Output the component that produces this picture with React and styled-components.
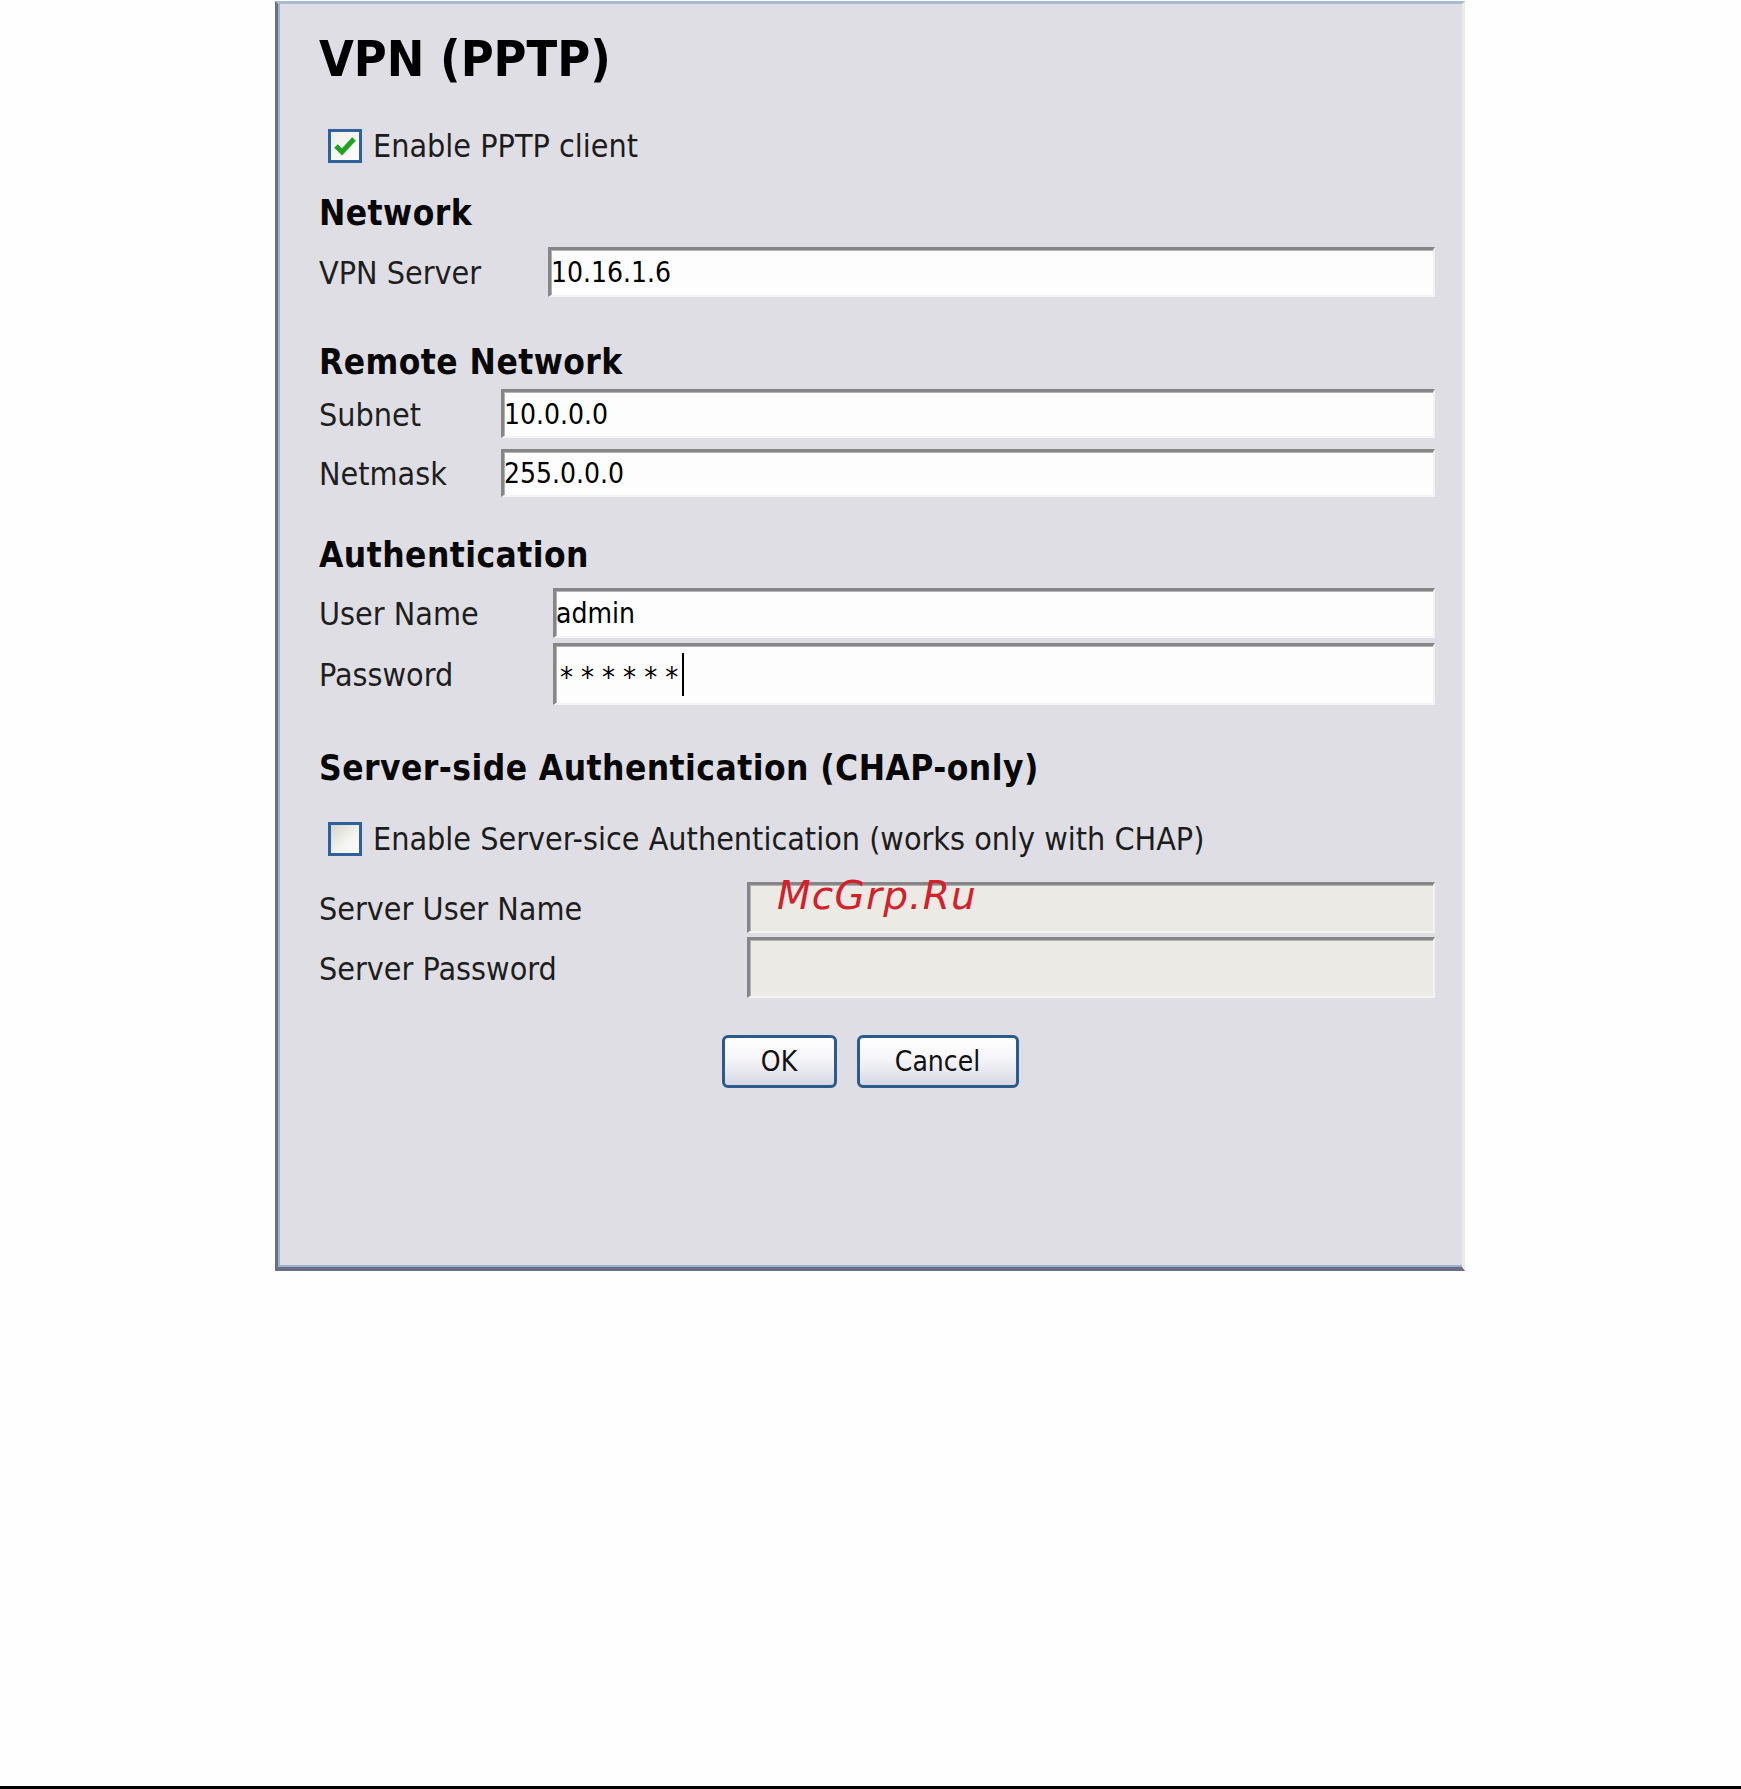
import styled, { createGlobalStyle } from 'styled-components'

const GlobalStyle = createGlobalStyle`
  html, body {
    margin: 0;
    padding: 0;
    background: #fefefe;
  }
  body {
    font-family: "DejaVu Sans Condensed", "DejaVu Sans", Verdana, sans-serif;
    font-stretch: condensed;
  }
`

const Page = styled.div`
  width: 1741px;
  height: 1789px;
  box-sizing: border-box;
  padding-top: 1px;
  display: flex;
  flex-direction: column;
`

const Panel = styled.div`
  margin-left: 275px;
  width: 1190px;
  height: 1270px;
  box-sizing: border-box;
  background: #dfdee4;
  border-top: 3px solid #a9bbd1;
  border-left: 3px solid #6b6e88;
  border-bottom: 4px solid #6b6e88;
  border-right: 3px solid #ebeae3;
  box-shadow: inset 2px -2px 0 #9eb2cb;
  padding: 25px 27px 0 41px;
  display: flex;
  flex-direction: column;
`

const Title = styled.h1`
  margin: 0;
  font-size: 50px;
  line-height: 60px;
  font-weight: bold;
  color: #000;
`

const Heading = styled.h2`
  margin: ${p => p.$mt}px 0 0;
  font-size: 35px;
  line-height: 40px;
  font-weight: bold;
  letter-spacing: 0.45px;
  color: #080808;
`

const CheckRow = styled.label`
  display: flex;
  align-items: center;
  gap: 11px;
  height: 34px;
  margin-top: ${p => p.$mt}px;
  padding-left: 9px;
  font-size: 32px;
  line-height: 34px;
  color: #1c1c1c;
`

const Box = styled.span`
  width: 34px;
  height: 34px;
  box-sizing: border-box;
  border: 3px solid #30619a;
  background: ${p => p.$checked
    ? 'linear-gradient(135deg, #eeeeea, #ffffff)'
    : 'linear-gradient(135deg, #d6d6cf, #f4f4f1 60%, #ffffff)'};
  display: flex;
  align-items: center;
  justify-content: center;
`

const Row = styled.div`
  display: grid;
  grid-template-columns: ${p => p.$label}px 1fr;
  align-items: center;
  margin-top: ${p => p.$mt}px;
`

const Label = styled.span`
  font-size: 32px;
  line-height: 40px;
  padding-top: 2px;
  color: #1e1e1e;
  white-space: nowrap;
`

const Field = styled.div`
  position: relative;
  height: ${p => p.$h}px;
  box-sizing: border-box;
  display: flex;
  align-items: center;
  padding-left: ${p => p.$pad || 0}px;
  border-top: 3px solid #868686;
  border-left: 3px solid #868686;
  border-right: 2px solid #f2f2f2;
  border-bottom: 2px solid #f4f4f4;
  box-shadow: inset 1px 1px 0 #b2b2b2;
  background: ${p => (p.$disabled ? '#ebeae4' : '#fdfdfd')};
  font-size: 28px;
  color: #000;
  white-space: nowrap;
`

const Stars = styled.span`
  letter-spacing: 8px;
  font-size: 29px;
  padding-top: 4px;
`

const Caret = styled.span`
  display: inline-block;
  width: 2px;
  height: 43px;
  margin-left: -4px;
  background: #000;
`

const Watermark = styled.span`
  position: absolute;
  left: 27px;
  top: -9px;
  font-family: "DejaVu Sans", Verdana, sans-serif;
  font-stretch: normal;
  font-style: italic;
  font-size: 39px;
  line-height: 39px;
  letter-spacing: 1.2px;
  color: #d3202a;
  pointer-events: none;
`

const ButtonRow = styled.div`
  display: flex;
  justify-content: center;
  gap: 20px;
  margin: 37px -27px 0 -41px;
`

const Button = styled.button`
  width: ${p => p.$w}px;
  height: 53px;
  box-sizing: border-box;
  border: 3px solid #2b5a8b;
  border-radius: 6px;
  background: linear-gradient(to bottom, #ffffff 0%, #f5f5f8 45%, #d8d8e5 100%);
  font-family: inherit;
  font-stretch: condensed;
  font-size: 28px;
  color: #111;
  padding: 0;
`

const Rule = styled.div`
  margin-top: auto;
  height: 3px;
  background: #000;
`

const Check = () => (
  <svg width="24" height="22" viewBox="0 0 24 22">
    <polyline points="3,11 9,17 21,4" fill="none" stroke="#21a121" strokeWidth="5" />
  </svg>
)

export default function App() {
  return (
    <>
      <GlobalStyle />
      <Page>
        <Panel>
          <Title>VPN (PPTP)</Title>

          <CheckRow $mt={40}>
            <Box $checked><Check /></Box>
            Enable PPTP client
          </CheckRow>

          <Heading $mt={30}>Network</Heading>
          <Row $label={229} $mt={14}>
            <Label>VPN Server</Label>
            <Field $h={50}>10.16.1.6</Field>
          </Row>

          <Heading $mt={45}>Remote Network</Heading>
          <Row $label={182} $mt={7}>
            <Label>Subnet</Label>
            <Field $h={49}>10.0.0.0</Field>
          </Row>
          <Row $label={182} $mt={11}>
            <Label>Netmask</Label>
            <Field $h={48}>255.0.0.0</Field>
          </Row>

          <Heading $mt={38}>Authentication</Heading>
          <Row $label={234} $mt={13}>
            <Label>User Name</Label>
            <Field $h={50}>admin</Field>
          </Row>
          <Row $label={234} $mt={5}>
            <Label>Password</Label>
            <Field $h={62} $pad={4}>
              <Stars>******</Stars>
              <Caret />
            </Field>
          </Row>

          <Heading $mt={43}>Server-side Authentication (CHAP-only)</Heading>
          <CheckRow $mt={34}>
            <Box />
            Enable Server-sice Authentication (works only with CHAP)
          </CheckRow>
          <Row $label={428} $mt={26}>
            <Label>Server User Name</Label>
            <Field $h={51} $disabled>
              <Watermark>McGrp.Ru</Watermark>
            </Field>
          </Row>
          <Row $label={428} $mt={4}>
            <Label>Server Password</Label>
            <Field $h={61} $disabled />
          </Row>

          <ButtonRow>
            <Button $w={115}>OK</Button>
            <Button $w={162}>Cancel</Button>
          </ButtonRow>
        </Panel>
        <Rule />
      </Page>
    </>
  )
}
